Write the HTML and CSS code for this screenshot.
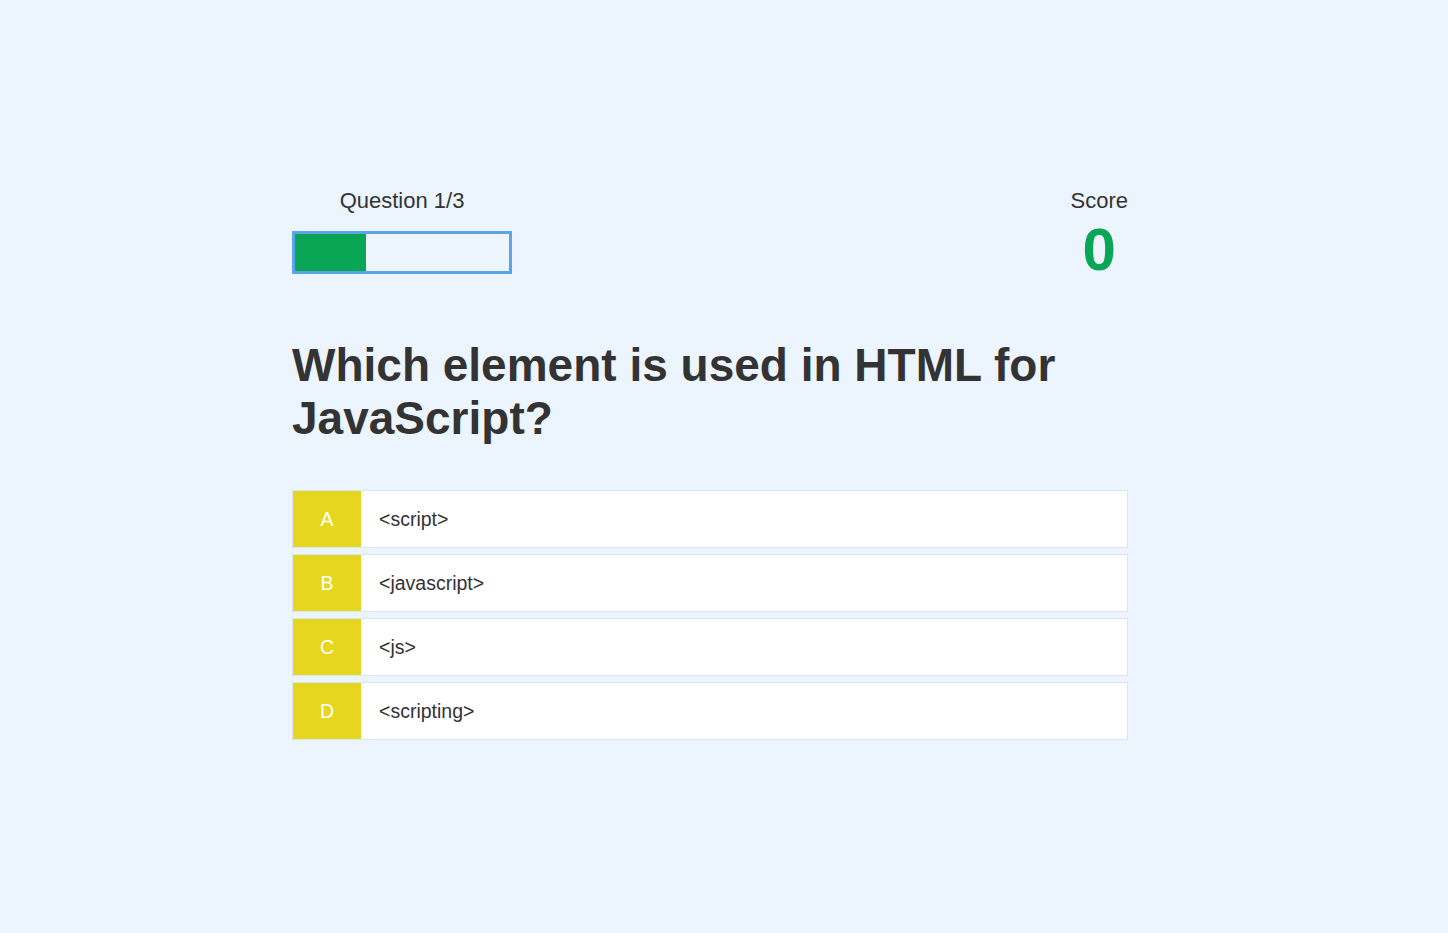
FILE: index.html
```html
<!DOCTYPE html>
<html lang="en">
<head>
<meta charset="utf-8">
<title>Quiz</title>
<link rel="stylesheet" href="styles.css">
</head>
<body>
<main class="quiz">
  <header class="quiz-header">
    <div class="progress-block">
      <div class="progress-label">Question 1/3</div>
      <div class="progress-bar"><div class="progress-fill" style="width:33.333%"></div></div>
    </div>
    <div class="score-block">
      <div class="score-label">Score</div>
      <div class="score-value">0</div>
    </div>
  </header>
  <h1 class="question">Which element is used in HTML for JavaScript?</h1>
  <ul class="answers">
    <li class="answer"><span class="answer-letter">A</span><span class="answer-text">&lt;script&gt;</span></li>
    <li class="answer"><span class="answer-letter">B</span><span class="answer-text">&lt;javascript&gt;</span></li>
    <li class="answer"><span class="answer-letter">C</span><span class="answer-text">&lt;js&gt;</span></li>
    <li class="answer"><span class="answer-letter">D</span><span class="answer-text">&lt;scripting&gt;</span></li>
  </ul>
</main>
</body>
</html>
```
FILE: styles.css
```css
html, body {
  margin: 0;
  padding: 0;
}
body {
  background: #ecf4fe;
  font-family: "Liberation Sans", Arial, sans-serif;
  color: #333333;
  min-height: 933px;
}
.quiz {
  width: 836px;
  margin-left: 292px;
  padding-top: 188px;
}
.quiz-header {
  display: flex;
  justify-content: space-between;
  align-items: flex-start;
}
.progress-block {
  width: 220px;
  display: flex;
  flex-direction: column;
  align-items: center;
}
.progress-label {
  font-size: 22px;
  line-height: 25px;
}
.progress-bar {
  margin-top: 18px;
  width: 220px;
  height: 43px;
  box-sizing: border-box;
  border: 3px solid #5ba4e6;
}
.progress-fill {
  height: 100%;
  background: #0aa656;
}
.score-block {
  display: flex;
  flex-direction: column;
  align-items: center;
}
.score-label {
  font-size: 22px;
  line-height: 25px;
}
.score-value {
  margin-top: 7px;
  font-size: 60px;
  line-height: 60px;
  font-weight: bold;
  color: #0aa656;
}
.question {
  margin: 59px 0 0;
  font-size: 46px;
  line-height: 53px;
  font-weight: bold;
  color: #333333;
}
.answers {
  list-style: none;
  margin: 45px 0 0;
  padding: 0;
  display: flex;
  flex-direction: column;
  gap: 6px;
}
.answer {
  display: flex;
  height: 58px;
  box-sizing: border-box;
  border: 1px solid #d4e6f7;
  background: #ffffff;
}
.answer-letter {
  width: 68px;
  flex: none;
  background: #e6d71e;
  color: #ffffff;
  font-size: 19.5px;
  display: flex;
  align-items: center;
  justify-content: center;
}
.answer-text {
  display: flex;
  align-items: center;
  padding-left: 18px;
  font-size: 19.5px;
  color: #333333;
}
```
